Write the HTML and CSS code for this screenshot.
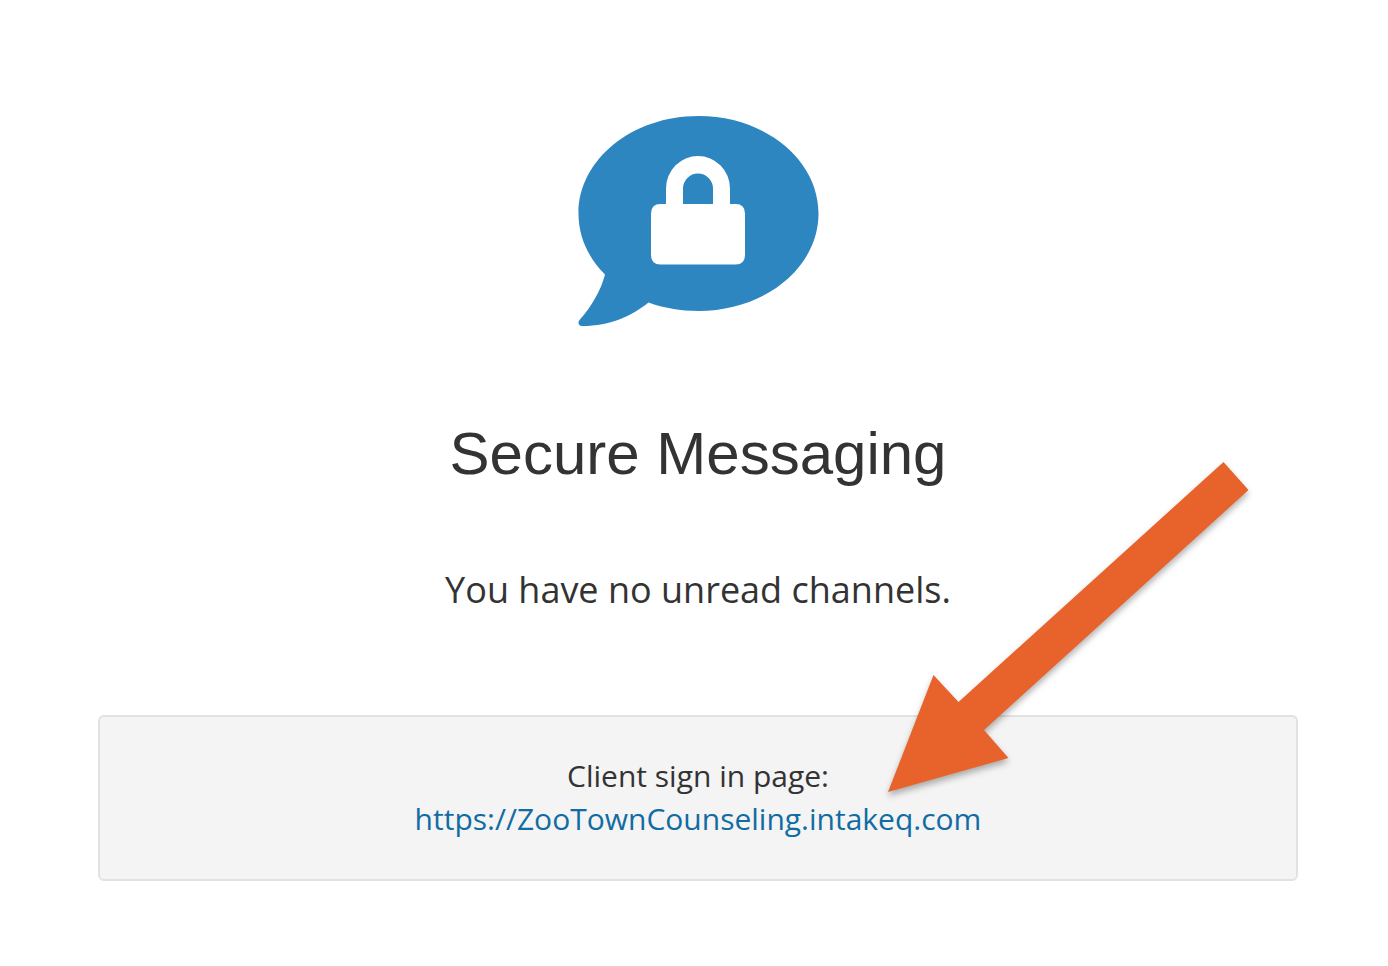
FILE: index.html
```
<!DOCTYPE html>
<html lang="en">
<head>
<meta charset="utf-8">
<title>Secure Messaging</title>
<meta name="viewport" content="width=device-width, initial-scale=1">
<link rel="stylesheet" href="styles.css">
</head>
<body>
<main class="page">
  <svg class="logo" viewBox="0 0 241 212" aria-hidden="true">
    <path class="logo-bubble" d="M120.500 1C187 1 240.500 44.500 240.500 98.500S187 196 120.500 196C102.500 196 85.500 193 70.500 187.500C54 200.500 33 211 4 211C.5 211 -.5 207.500 1.500 205C14 191 23 175 27 159.500C10 142.500 .5 121.500 .5 98.500C.5 44.500 54 1 120.500 1Z"/>
    <path class="logo-lock" fill-rule="evenodd" d="M88 89V73.500a32 32.500 0 0 1 64 0V89h5.500q9.500 0 9.500 9.500v41.500q0 9.500-9.500 9.500h-75q-9.500 0-9.500-9.500V98.500q0-9.500 9.500-9.500ZM105 89h30V73.500a15 15 0 0 0-30 0Z"/>
  </svg>
  <h1 class="title">Secure Messaging</h1>
  <p class="status">You have no unread channels.</p>
  <section class="signin">
    <p class="signin-label">Client sign in page:</p>
    <a class="signin-link" href="https://ZooTownCounseling.intakeq.com">https://ZooTownCounseling.intakeq.com</a>
    <svg class="arrow" viewBox="0 0 362 332" aria-hidden="true">
      <path d="M0 330L45.500 213L70.500 240L335.500 0L360.500 28L96 268L120.500 296Z"/>
    </svg>
  </section>
</main>
</body>
</html>
```
FILE: styles.css
```
* {
  box-sizing: border-box;
}

body {
  margin: 0;
  background: #fff;
  color: #333;
  font-family: "Open Sans", sans-serif;
}

.page {
  display: flex;
  flex-direction: column;
  align-items: center;
  padding: 115px 90px 85px 98px;
  text-align: center;
}

.logo {
  width: 241px;
  height: 212px;
}

.logo-bubble {
  fill: #2e86c1;
}

.logo-lock {
  fill: #fff;
}

.title {
  margin: 94px 0 77px;
  font-family: "Liberation Sans", Arial, sans-serif;
  font-size: 60px;
  font-weight: 400;
  line-height: 66px;
}

.status {
  margin: 0 0 99px;
  font-size: 36px;
  line-height: 52px;
}

.signin {
  position: relative;
  width: 100%;
  padding: 37px 38px 39px;
  border: 2px solid #e2e2e2;
  border-radius: 6px;
  background: #f4f4f4;
  font-size: 30px;
  line-height: 43px;
}

.signin-label {
  margin: 0;
}

.signin-link {
  color: #116ca3;
  text-decoration: none;
}

/* Pointer laid over the panel, its tip beside the address */
.arrow {
  position: absolute;
  bottom: 85px;
  left: calc(50% + 190px);
  width: 362px;
  height: 332px;
  overflow: visible;
  fill: #e8632c;
  filter: drop-shadow(0 4px 3px rgba(0, 0, 0, 0.3));
  pointer-events: none;
}
```
